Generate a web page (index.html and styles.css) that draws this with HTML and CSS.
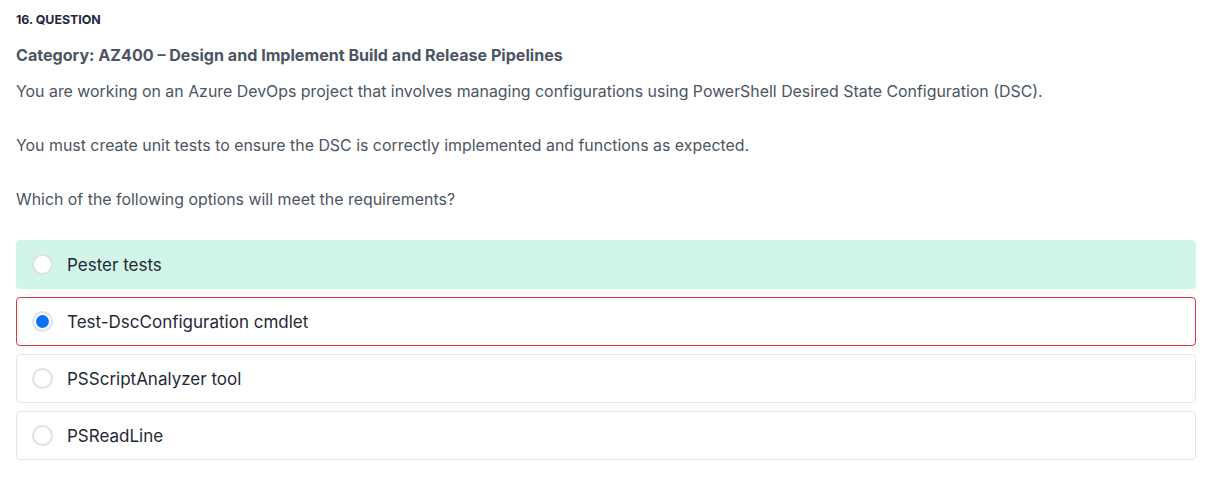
FILE: index.html
```html
<!DOCTYPE html>
<html>
<head>
<meta charset="utf-8">
<link rel="stylesheet" href="styles.css">
</head>
<body>
<div class="quiz">
  <div class="q-num">16. QUESTION</div>
  <div class="q-cat">Category: AZ400 – Design and Implement Build and Release Pipelines</div>
  <p class="q-text">You are working on an Azure DevOps project that involves managing configurations using PowerShell Desired State Configuration (DSC).</p>
  <p class="q-text">You must create unit tests to ensure the DSC is correctly implemented and functions as expected.</p>
  <p class="q-text">Which of the following options will meet the requirements?</p>
  <ul class="options">
    <li class="option correct"><span class="radio"></span><span class="label">Pester tests</span></li>
    <li class="option wrong"><span class="radio checked"></span><span class="label">Test-DscConfiguration cmdlet</span></li>
    <li class="option"><span class="radio"></span><span class="label">PSScriptAnalyzer tool</span></li>
    <li class="option"><span class="radio"></span><span class="label">PSReadLine</span></li>
  </ul>
</div>
</body>
</html>
```
FILE: styles.css
```css
html, body {
  margin: 0;
  padding: 0;
  background: #ffffff;
}
body {
  font-family: Inter, "Noto Sans", "Liberation Sans", sans-serif;
}
.quiz {
  padding: 12px 23px 0 16px;
}
.q-num {
  font-size: 12.4px;
  line-height: 16px;
  font-weight: 700;
  color: #1e293b;
  margin-bottom: 15px;
}
.q-cat {
  font-size: 16.1px;
  line-height: 24px;
  font-weight: 650;
  color: #4b5563;
  margin-bottom: 13px;
}
.q-text {
  font-size: 15.9px;
  line-height: 24px;
  color: #4b5563;
  margin: 0 0 30px 0;
}
.q-text:last-of-type {
  margin-bottom: 28px;
}
.options {
  list-style: none;
  margin: 0;
  padding: 0;
  display: flex;
  flex-direction: column;
  gap: 8px;
}
.option {
  height: 49px;
  box-sizing: border-box;
  border: 1px solid #e5e7eb;
  border-radius: 4px;
  display: flex;
  align-items: center;
  padding: 0 15px;
  background: #fff;
}
.option.correct {
  background: #d1f5e6;
  border-color: #d1f5e6;
}
.option.wrong {
  border-color: #dc3545;
}
.radio {
  width: 21px;
  height: 21px;
  box-sizing: border-box;
  border: 2px solid #dde1e8;
  border-radius: 50%;
  background: #fff;
  margin-right: 14px;
  flex: none;
  display: flex;
  align-items: center;
  justify-content: center;
}
.radio.checked::after {
  content: "";
  width: 13px;
  height: 13px;
  border-radius: 50%;
  background: #0b72f5;
}
.label {
  font-size: 17px;
  color: #1f2937;
}
```
